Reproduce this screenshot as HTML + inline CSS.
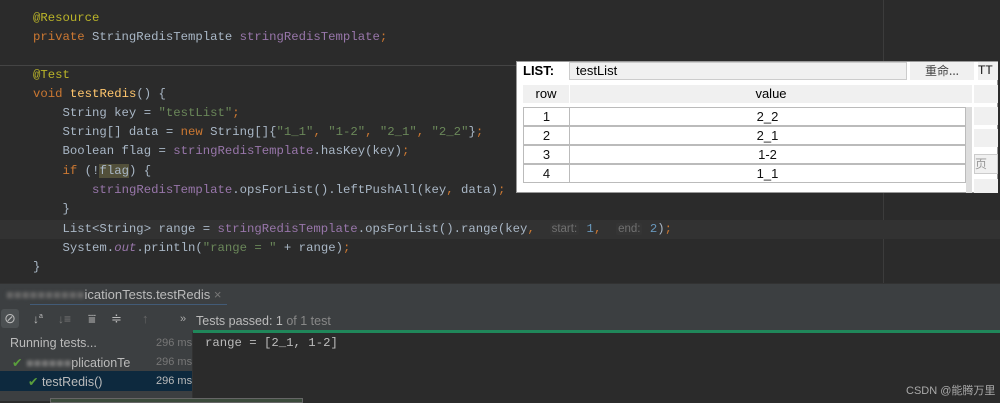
<!DOCTYPE html>
<html><head><meta charset="utf-8"><style>
*{margin:0;padding:0;box-sizing:border-box}
body{width:1000px;height:401px;overflow:hidden;background:#2b2b2b;position:relative;font-family:"Liberation Sans",sans-serif}
.code{position:absolute;left:0;top:0;width:1000px;height:283px;background:#2b2b2b}
.ln{position:absolute;left:33px;font-family:"Liberation Mono",monospace;font-size:12.3px;color:#a9b7c6;white-space:pre;line-height:19px}
.an{color:#bbb529}.kw{color:#cc7832}.fd{color:#9876aa}.st{color:#6a8759}.mt{color:#ffc66d}.it{font-style:italic;color:#9876aa}.nm{color:#6897bb}
.hint{background:#353535;color:#707070;padding:0 2px;border-radius:2px;font-family:"Liberation Sans",sans-serif;font-size:11.5px}
.abs{position:absolute}
.pop{position:absolute;left:516px;top:61px;width:482px;height:132px;background:#fff;border:1px solid #999}
.pop div{position:absolute}
.cell{background:#fff;border:1px solid #bbb;text-align:center;font-size:13px;color:#111;line-height:17px}
.grey{background:#f0f0f0}
</style></head><body>
<div class="code">
<div class="abs" style="left:0;top:65px;width:883px;height:1px;background:#444"></div>
<div class="abs" style="left:883px;top:0;width:1px;height:283px;background:#3c3c3c"></div>
<div class="abs" style="left:0;top:220px;width:1000px;height:19px;background:#323232"></div>
<div class="ln" style="top:9px"><span class="an">@Resource</span></div>
<div class="ln" style="top:28px"><span class="kw">private</span> StringRedisTemplate <span class="fd">stringRedisTemplate</span><span class="kw">;</span></div>
<div class="ln" style="top:66px"><span class="an">@Test</span></div>
<div class="ln" style="top:85px"><span class="kw">void</span> <span class="mt">testRedis</span>() {</div>
<div class="ln" style="top:104px">    String key = <span class="st">"testList"</span><span class="kw">;</span></div>
<div class="ln" style="top:123px">    String[] data = <span class="kw">new</span> String[]{<span class="st">"1_1"</span><span class="kw">, </span><span class="st">"1-2"</span><span class="kw">, </span><span class="st">"2_1"</span><span class="kw">, </span><span class="st">"2_2"</span>}<span class="kw">;</span></div>
<div class="ln" style="top:142px">    Boolean flag = <span class="fd">stringRedisTemplate</span>.hasKey(key)<span class="kw">;</span></div>
<div class="ln" style="top:162px">    <span class="kw">if</span> (!<span style="background:#52503a">flag</span>) {</div>
<div class="ln" style="top:181px">        <span class="fd">stringRedisTemplate</span>.opsForList().leftPushAll(key<span class="kw">,</span> data)<span class="kw">;</span></div>
<div class="ln" style="top:200px">    }</div>
<div class="ln" style="top:220px">    List&lt;String&gt; range = <span class="fd">stringRedisTemplate</span>.opsForList().range(key<span class="kw">,</span>  <span class="hint">start:</span> <span class="nm">1</span><span class="kw">,</span>  <span class="hint">end:</span> <span class="nm">2</span>)<span class="kw">;</span></div>
<div class="ln" style="top:239px">    System.<span class="it">out</span>.println(<span class="st">"range = "</span> + range)<span class="kw">;</span></div>
<div class="ln" style="top:258px">}</div>
</div>
<div class="pop">
 <div style="left:6px;top:1px;font-weight:bold;font-size:13px;color:#000">LIST:</div>
 <div class="grey" style="left:52px;top:0;width:338px;height:18px;border:1px solid #ccc;font-size:13px;padding-left:6px;line-height:16px">testList</div>
 <div class="grey" style="left:393px;top:0;width:64px;height:18px;font-size:12px;text-align:center;line-height:17px;color:#444;font-family:'Noto Sans CJK SC',sans-serif">重命...</div>
 <div class="grey" style="left:461px;top:0;width:20px;height:18px;font-size:12px;line-height:17px;color:#111">TT</div>
 <div class="grey" style="left:6px;top:23px;width:46px;height:18px;font-size:13px;text-align:center;line-height:18px">row</div>
 <div class="grey" style="left:53px;top:23px;width:402px;height:18px;font-size:13px;text-align:center;line-height:18px">value</div>
 <div class="cell" style="left:6px;top:45px;width:47px;height:19px">1</div><div class="cell" style="left:52px;top:45px;width:397px;height:19px">2_2</div>
 <div class="cell" style="left:6px;top:64px;width:47px;height:19px">2</div><div class="cell" style="left:52px;top:64px;width:397px;height:19px">2_1</div>
 <div class="cell" style="left:6px;top:83px;width:47px;height:19px">3</div><div class="cell" style="left:52px;top:83px;width:397px;height:19px">1-2</div>
 <div class="cell" style="left:6px;top:102px;width:47px;height:19px">4</div><div class="cell" style="left:52px;top:102px;width:397px;height:19px">1_1</div>
 <div style="left:449px;top:45px;width:6px;height:86px;background:#ddd"></div>
 <div class="grey" style="left:457px;top:23px;width:24px;height:18px"></div>
 <div class="grey" style="left:457px;top:45px;width:24px;height:18px"></div>
 <div class="grey" style="left:457px;top:67px;width:24px;height:18px"></div>
 <div class="grey" style="left:457px;top:92px;width:24px;height:20px;border:1px solid #ccc;font-size:12px;color:#999;font-family:'Noto Sans CJK SC',sans-serif">页</div>
 <div class="grey" style="left:457px;top:117px;width:24px;height:14px"></div>
</div>
<div class="abs" style="left:0;top:283px;width:1000px;height:118px;background:#2b2b2b">
 <div class="abs" style="left:0;top:0;width:1000px;height:22px;background:#3c3f41;border-top:1px solid #323232"></div>
 <div class="abs" style="left:6px;top:4px;font-size:13px;color:#bbb"><span style="color:#666;filter:blur(1.5px)">■■■■■■■■■■</span>icationTests.testRedis <span style="color:#777">×</span></div>
 <div class="abs" style="left:30px;top:21px;width:197px;height:2px;background:#4a88c7;opacity:.4"></div>
 <div class="abs" style="left:0;top:22px;width:1000px;height:27px;background:#3c3f41"></div>
 <div class="abs" style="left:1px;top:26px;width:18px;height:19px;background:#4c5052;border-radius:3px;color:#bbb;font-size:14px;text-align:center;line-height:19px">⊘</div>
 <div class="abs" style="left:33px;top:29px;color:#bbb;font-size:12px">↓<sup style="font-size:7px">a</sup></div>
 <div class="abs" style="left:58px;top:29px;color:#777;font-size:12px">↓≡</div>
 <div class="abs" style="left:88px;top:28px;color:#bbb;font-size:13px">⩸</div>
 <div class="abs" style="left:111px;top:28px;color:#bbb;font-size:13px">≑</div>
 <div class="abs" style="left:142px;top:28px;color:#666;font-size:13px">↑</div>
 <div class="abs" style="left:180px;top:30px;color:#aaa;font-size:11px">»</div>
 <div class="abs" style="left:196px;top:31px;font-size:12.5px;color:#bbb">Tests passed: 1 <span style="color:#888">of 1 test</span></div>
 <div class="abs" style="left:193px;top:47px;width:807px;height:3px;background:#20875a"></div>
 <div class="abs" style="left:0;top:49px;width:193px;height:69px;background:#3c3f41;border-right:1px solid #323232"></div>
 <div class="abs" style="left:0;top:88px;width:192px;height:20px;background:#0d293e"></div>
 <div class="abs" style="left:10px;top:53px;font-size:12.5px;color:#bbb">Running tests...</div>
 <div class="abs" style="left:156px;top:54px;font-size:11px;color:#777">296 ms</div>
 <div class="abs" style="left:12px;top:72px;font-size:12.5px;color:#bbb"><span style="color:#5a9e3c">✔</span> <span style="color:#777;filter:blur(1.5px)">■■■■■■</span>plicationTe</div>
 <div class="abs" style="left:156px;top:73px;font-size:11px;color:#777">296 ms</div>
 <div class="abs" style="left:28px;top:91px;font-size:12.5px;color:#bbb"><span style="color:#5a9e3c">✔</span> testRedis()</div>
 <div class="abs" style="left:156px;top:92px;font-size:11px;color:#bbb">296 ms</div>
 <div class="abs" style="left:50px;top:115px;width:253px;height:5px;border:1px solid #666;background:#3b4a3b"></div>
 <div class="abs" style="left:205px;top:53px;font-family:'Liberation Mono',monospace;font-size:12.3px;color:#bbb">range = [2_1, 1-2]</div>
 <div class="abs" style="left:906px;top:99px;font-size:11px;color:#aaa;font-family:'Liberation Sans','Noto Sans CJK SC',sans-serif">CSDN @能腾万里</div>
</div>
</body></html>
